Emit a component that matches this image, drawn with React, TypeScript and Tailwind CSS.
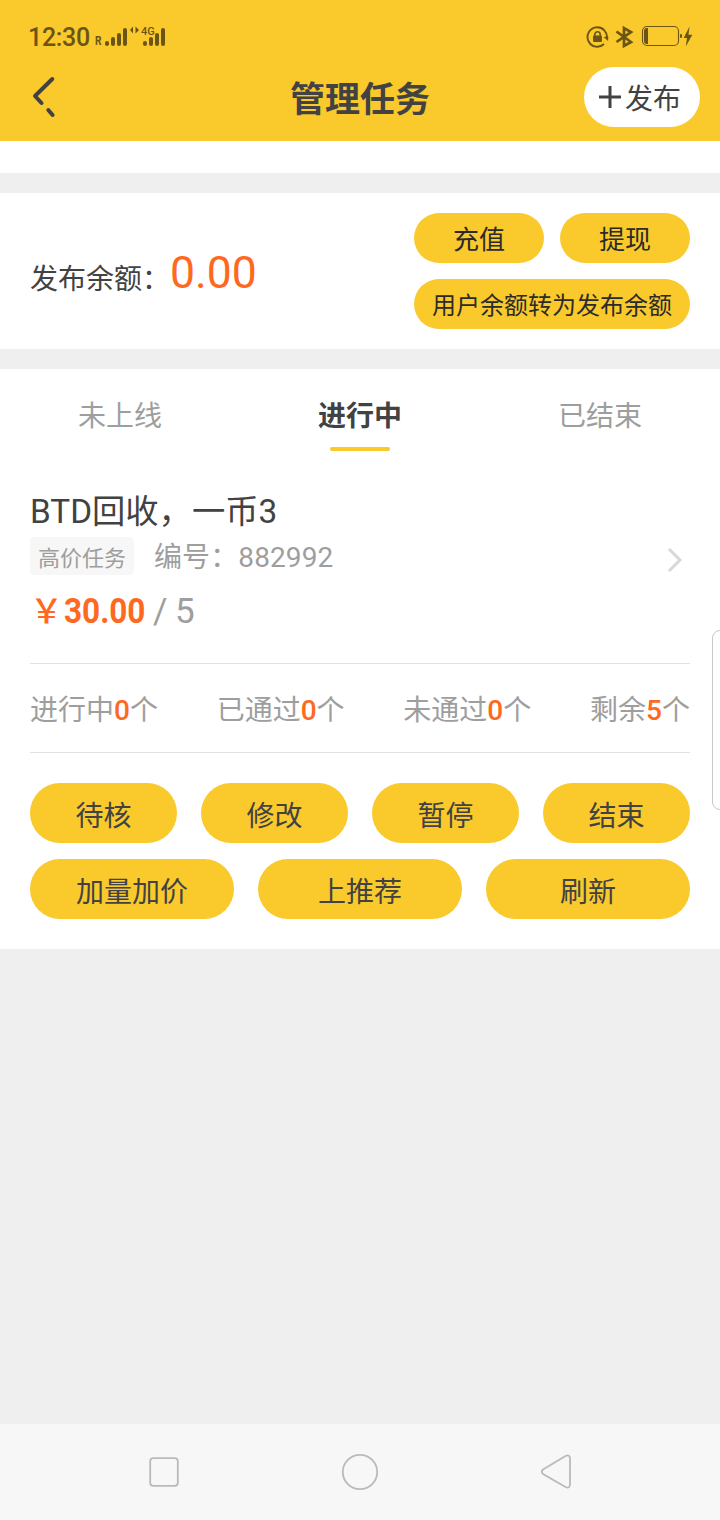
const tabs = ["未上线", "进行中", "已结束"];

const stats = [
  { label: "进行中", count: 0 },
  { label: "已通过", count: 0 },
  { label: "未通过", count: 0 },
  { label: "剩余", count: 5 },
];

function StatusBar() {
  return (
    <div className="flex h-[60px] justify-between pl-[28px] pr-[26px] text-[#6b5514]">
      <div className="flex pt-[24px]">
        <span className="w-[67px] whitespace-nowrap text-[25px] font-medium leading-[28px] tracking-[-0.3px]">
          12:30
        </span>
        <svg width="72" height="24" viewBox="95 24 72 24" fill="currentColor">
          <text x="95" y="45" fontSize="12" fontWeight="700" textLength="6.500" lengthAdjust="spacingAndGlyphs">
            R
          </text>
          <rect x="105" y="41" width="4" height="5" rx="2" />
          <rect x="111" y="37" width="4" height="9" rx="2" />
          <rect x="117" y="33" width="4" height="13" rx="2" />
          <rect x="123" y="28" width="4" height="18" rx="2" />
          <path d="M133 26.500v7l-3-3.500zM135.500 26.500v7l3.500-3.500z" />
          <text x="141" y="35" fontSize="11" fontWeight="500">
            4G
          </text>
          <rect x="143" y="41" width="4" height="5" rx="2" />
          <rect x="149" y="37" width="4" height="9" rx="2" />
          <rect x="155" y="33" width="4" height="13" rx="2" />
          <rect x="161" y="28" width="4" height="18" rx="2" />
        </svg>
      </div>
      <svg
        className="mt-[24px]"
        width="108"
        height="25"
        viewBox="586 24 108 25"
        fill="none"
        stroke="currentColor"
      >
        <path d="M604 44a9.700 9.700 0 1 1 2.800-5.200" strokeWidth="1.900" />
        <path d="M603.500 37l4.800-.5-.2 4.500z" fill="currentColor" stroke="none" />
        <rect x="593" y="35.500" width="9" height="6.500" rx="1" fill="currentColor" stroke="none" />
        <path d="M594.800 36.500v-2a2.700 2.700 0 0 1 5.400 0v2" strokeWidth="1.600" />
        <path d="M616.500 31.500l14.500 10.500-7 4V28l7 4-14.500 10" strokeWidth="2.700" />
        <rect x="642.500" y="26.500" width="36" height="19" rx="4.500" strokeWidth="1.100" />
        <path d="M648 28v16h-1.500q-2.500 0-2.500-3V31q0-3 2.500-3z" fill="currentColor" stroke="none" />
        <rect x="680" y="34" width="2" height="4" rx="1" fill="currentColor" stroke="none" />
        <path d="M689.500 26.500l-5.800 11.500h3.300l-1.200 8.500 6.500-11.700h-3.800z" fill="currentColor" stroke="none" />
      </svg>
    </div>
  );
}

function Header() {
  return (
    <header className="h-[141px] bg-[#fac92b]">
      <StatusBar />
      <div className="flex h-[74px] items-center justify-between pl-[30px] pr-5">
        <div className="w-[116px]">
          <svg width="30" height="44" viewBox="30 75 30 44" fill="none" stroke="#424242" strokeWidth="4" strokeLinecap="round">
            <path d="M52.300 79L35 96l6.500 7M48.300 110l4.300 5" strokeLinejoin="round" />
          </svg>
        </div>
        <h1 className="mr-[10px] pt-2 text-center text-[35px] font-bold leading-[50px]">管理任务</h1>
        <button className="flex h-[60px] w-[116px] items-center rounded-full bg-white pl-[15px] text-[28px]">
          <svg className="mr-1 shrink-0" width="22" height="22" viewBox="0 0 22 22" stroke="#424242" strokeWidth="3">
            <path d="M0 11h22M11 0v22" />
          </svg>
          <span className="pt-1.5">发布</span>
        </button>
      </div>
    </header>
  );
}

function Balance() {
  return (
    <section className="flex h-[156px] justify-between bg-white px-[30px] py-5">
      <div className="flex items-baseline pt-[28px]">
        <span className="relative top-px text-[28px]">发布余额：</span>
        <span className="-mt-px text-[44.500px] leading-[66px] text-[#ff6820]">0.00</span>
      </div>
      <div className="grid w-[276px] grid-cols-2 gap-4 text-[#2b2b2b]">
        <button className="h-[50px] rounded-full bg-[#fac92b] pt-1 text-[26px]">充值</button>
        <button className="h-[50px] rounded-full bg-[#fac92b] pt-1 text-[26px]">提现</button>
        <button className="col-span-2 h-[50px] rounded-full bg-[#fac92b] pt-1 text-[24px]">
          用户余额转为发布余额
        </button>
      </div>
    </section>
  );
}

function Tabs() {
  return (
    <nav className="grid h-[90px] grid-cols-3">
      {tabs.map((tab, i) => (
        <div key={tab} className="flex flex-col items-center pt-[28px] text-[28px] leading-[40px]">
          <span className={i === 1 ? "font-bold" : "text-[#9e9e9e]"}>{tab}</span>
          {i === 1 && <i className="mt-[10px] h-1 w-[60px] rounded-sm bg-[#fac92b]" />}
        </div>
      ))}
    </nav>
  );
}

function TaskCard() {
  return (
    <article className="px-[30px] pb-[30px]">
      <div className="flex h-[205px] items-center justify-between border-b border-[#e2e2e2] pr-[7px]">
        <div className="h-full pt-[29px]">
          <h2 className="text-[33.300px] leading-[48px]">BTD回收，一币3</h2>
          <div className="mt-px flex h-[38px] text-[#9e9e9e]">
            <span className="mr-5 h-[38px] rounded bg-[#f7f7f7] px-2 text-[22px] leading-[43px]">
              高价任务
            </span>
            <span className="text-[28px] leading-[42px] tracking-[0.100px]">编号：882992</span>
          </div>
          <div className="mt-[13px] flex h-12 items-baseline text-[35px] leading-[48px] text-[#9e9e9e]">
            <span className="text-[33px] font-medium text-[#ff6820]">￥</span>
            <span className="ml-px w-[89px] origin-left scale-x-[0.900] font-bold text-[#ff6820]">30.00</span>
            <span className="tracking-[-0.500px]">/ 5</span>
          </div>
        </div>
        <svg className="-mt-[3px]" width="16" height="26" viewBox="0 0 16 26" fill="none" stroke="#d8d8d8" strokeWidth="3">
          <path d="M2 2l11 11L2 24" />
        </svg>
      </div>
      <div className="flex h-[89px] items-center justify-between border-b border-[#e2e2e2] pt-1.5 text-[28px] text-[#9e9e9e]">
        {stats.map((s) => (
          <span key={s.label}>
            {s.label}
            <span className="font-medium text-[#ff6820]">{s.count}</span>个
          </span>
        ))}
      </div>
      <div className="mt-[30px] grid grid-cols-4 gap-6 text-[28px]">
        {["待核", "修改", "暂停", "结束"].map((t) => (
          <button key={t} className="h-[60px] rounded-full bg-[#fac92b] pt-2">
            {t}
          </button>
        ))}
      </div>
      <div className="mt-4 grid grid-cols-3 gap-6 text-[28px]">
        {["加量加价", "上推荐", "刷新"].map((t) => (
          <button key={t} className="h-[60px] rounded-full bg-[#fac92b] pt-2">
            {t}
          </button>
        ))}
      </div>
    </article>
  );
}

function NavBar() {
  return (
    <footer className="mt-auto h-24 bg-[#f7f7f7]">
      <svg width="720" height="96" viewBox="0 1424 720 96" fill="none" stroke="#bababa" strokeWidth="1.800">
        <rect x="150.200" y="1458.200" width="27.600" height="27.600" rx="3" />
        <circle cx="360" cy="1472" r="17.200" />
        <path d="M543 1469.500L565.500 1456Q570 1454 570 1459V1484Q570 1489 565.500 1487L543 1474Q540.500 1471.500 543 1469.500z" />
      </svg>
    </footer>
  );
}

export default function App() {
  return (
    <div className="relative flex h-[1520px] w-[720px] flex-col overflow-hidden bg-[#efefef] font-[Roboto,'Noto_Sans_CJK_SC',sans-serif] text-[#424242]">
      <Header />
      <div className="h-8 bg-white" />
      <div className="h-5" />
      <Balance />
      <div className="h-5" />
      <main className="h-[580px] bg-white">
        <Tabs />
        <TaskCard />
      </main>
      <NavBar />
      {/* side drawer handle, mostly off the right edge */}
      <div className="absolute left-[712px] top-[630px] h-[180px] w-10 rounded-lg border border-[#c8c8c8] bg-white" />
    </div>
  );
}
